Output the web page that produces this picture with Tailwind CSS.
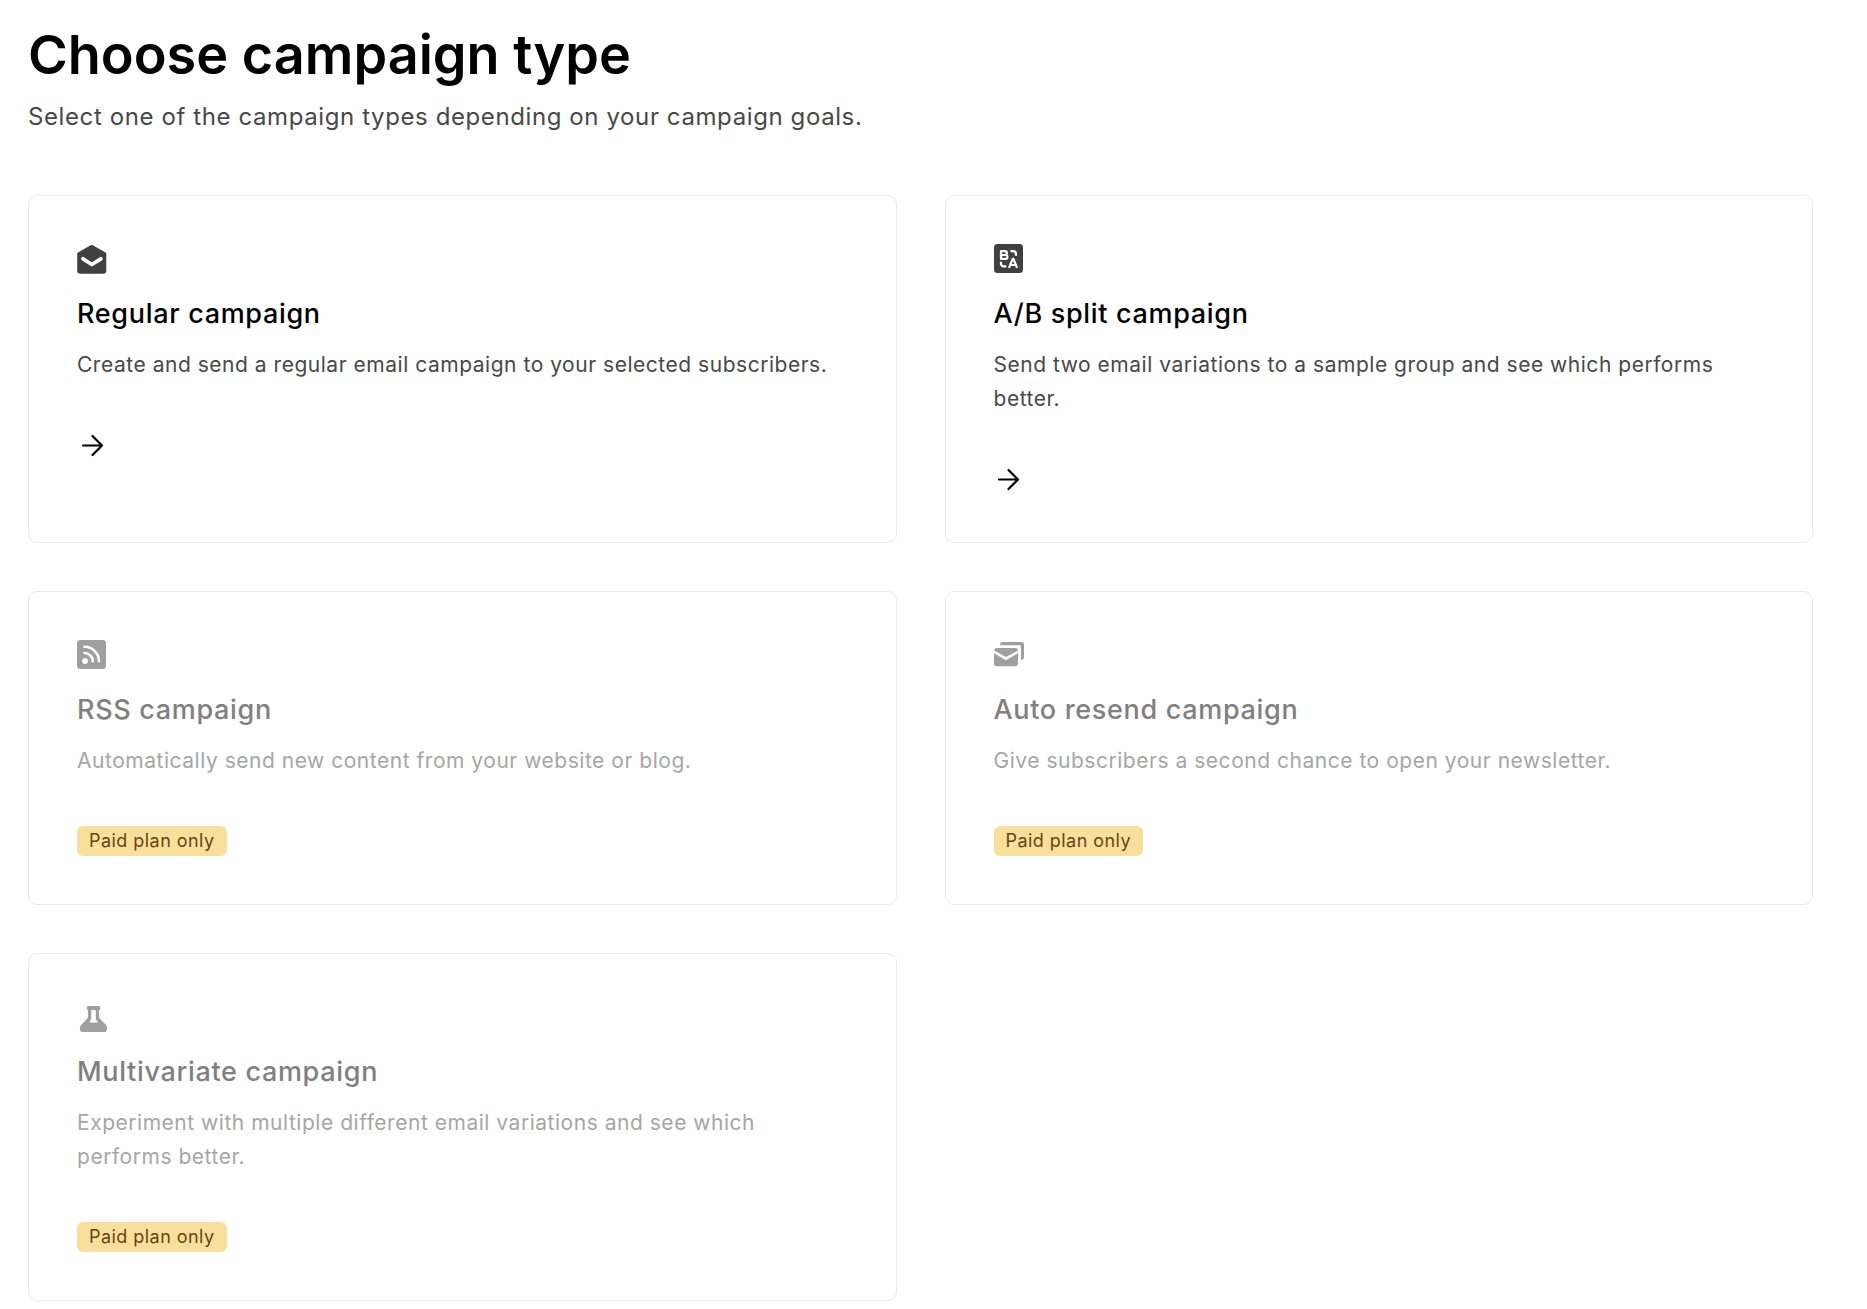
<!DOCTYPE html>
<html lang="en">
<head>
    <meta charset="UTF-8">
    <meta name="viewport" content="width=device-width, initial-scale=1.0">
    <title>Choose campaign type</title>
    <script src="https://cdn.jsdelivr.net/npm/@tailwindcss/browser@4"></script>
</head>
<body class="bg-white font-['Inter',sans-serif] text-black">

<main class="pt-[19px] pr-[54px] pb-2 pl-7">
    <header class="mb-[60px]">
        <h1 class="text-[54px] leading-[72px] font-semibold">Choose campaign type</h1>
        <p class="mt-2 text-2xl leading-9 tracking-wide text-[#484848]">Select one of the campaign types depending on your campaign goals.</p>
    </header>

    <div class="grid grid-cols-2 gap-12">
        <!-- Regular -->
        <a href="#regular" class="block rounded-[9px] border border-[#ebebed] p-12">
            <svg class="size-[30px] text-[#404040]" viewBox="0 0 30 30" fill="none">
                <path fill="currentColor" d="M13.2 1.5a3 3 0 0 1 3.1 0l11.8 6.8c.9.5 1.2 1.1 1.2 2V26.500a3.3 3.3 0 0 1-3.3 3.3H3.5A3.3 3.3 0 0 1 .2 26.500V10.300c0-.9.3-1.500 1.200-2z"/>
                <path stroke="#fff" stroke-width="3.800" stroke-linecap="round" stroke-linejoin="round" d="m6 14.800 8.800 5.700 9-5.700"/>
            </svg>
            <h2 class="mt-5 text-[27px] leading-10 font-medium tracking-wide">Regular campaign</h2>
            <p class="mt-3.5 text-[21px] leading-[34px] tracking-wide text-[#484848]">Create and send a regular email campaign to your selected subscribers.</p>
            <svg class="mt-12 size-[30px]" viewBox="0 0 30 30" fill="none" stroke="currentColor" stroke-width="2.200" stroke-linecap="round" stroke-linejoin="round"><path d="M6 15.500h19M15.500 6l9.500 9.500-9.500 9.500"/></svg>
        </a>

        <!-- A/B split -->
        <a href="#ab-split" class="block rounded-[9px] border border-[#ebebed] p-12">
            <svg class="size-[30px] text-[#404040]" viewBox="0 0 30 30" fill="none">
                <rect width="29" height="29" rx="3.500" fill="currentColor"/>
                <g stroke="#fff" stroke-width="2.200" stroke-linejoin="round">
                    <path d="M7 7.200h4a1.900 1.900 0 0 1 0 3.800H7zM7 11h4.500a1.900 1.900 0 0 1 0 3.900H7z"/>
                    <path d="m15 23.800 3.700-9h.7l3.700 9M16 21h6"/>
                    <path d="M16.500 7.200h2.500a3 3 0 0 1 3 3v1.500M7 17.700v1.700a3 3 0 0 0 3 3h2.300"/>
                </g>
            </svg>
            <h2 class="mt-5 text-[27px] leading-10 font-medium tracking-wide">A/B split campaign</h2>
            <p class="mt-3.5 text-[21px] leading-[34px] tracking-wide text-[#484848]">Send two email variations to a sample group and see which performs better.</p>
            <svg class="mt-12 size-[30px]" viewBox="0 0 30 30" fill="none" stroke="currentColor" stroke-width="2.200" stroke-linecap="round" stroke-linejoin="round"><path d="M5 15.500h19M14.500 6l9.500 9.500-9.500 9.500"/></svg>
        </a>

        <!-- RSS -->
        <section class="rounded-[9px] border border-[#ebebed] p-12">
            <svg class="size-[30px] text-[#9f9f9f]" viewBox="0 0 30 30" fill="none">
                <rect width="29" height="29" rx="3.500" fill="currentColor"/>
                <circle cx="8" cy="21" r="2.900" fill="#fff"/>
                <path stroke="#fff" stroke-width="2.600" stroke-linecap="round" d="M7.500 13a8.300 8.300 0 0 1 8.300 8.300M7.500 6.800a14.500 14.500 0 0 1 14.500 14.500"/>
            </svg>
            <h2 class="mt-5 text-[27px] leading-10 font-medium tracking-wide text-[#808080]">RSS campaign</h2>
            <p class="mt-3.5 text-[21px] leading-[34px] tracking-wide text-[#a6a6a6]">Automatically send new content from your website or blog.</p>
            <span class="mt-12 flex h-[30px] w-fit items-center rounded-md bg-[#f8e09c] px-3 text-lg tracking-wide text-[#6c4112]">Paid plan only</span>
        </section>

        <!-- Auto resend -->
        <section class="rounded-[9px] border border-[#ebebed] p-12">
            <svg class="size-[30px] text-[#9f9f9f]" viewBox="0 0 30 30" fill="none">
                <path fill="currentColor" d="M6 5.200A3 3 0 0 1 9 2h18.200A2.800 2.800 0 0 1 30 4.800V17a3 3 0 0 1-3 3V6.500A1.400 1.400 0 0 0 25.600 5.200z"/>
                <path fill="currentColor" d="M0 10.500A2.800 2.800 0 0 1 2.700 8h18.600a2.800 2.800 0 0 1 2.700 2.500l-12 6.500z"/>
                <path fill="currentColor" d="m0 13.300 11.200 6.400a1.600 1.600 0 0 0 1.600 0L24 13.300v10.200a2.800 2.800 0 0 1-2.800 2.800H2.800A2.800 2.800 0 0 1 0 23.500z"/>
            </svg>
            <h2 class="mt-5 text-[27px] leading-10 font-medium tracking-wide text-[#808080]">Auto resend campaign</h2>
            <p class="mt-3.5 text-[21px] leading-[34px] tracking-wide text-[#a6a6a6]">Give subscribers a second chance to open your newsletter.</p>
            <span class="mt-12 flex h-[30px] w-fit items-center rounded-md bg-[#f8e09c] px-3 text-lg tracking-wide text-[#6c4112]">Paid plan only</span>
        </section>

        <!-- Multivariate -->
        <section class="rounded-[9px] border border-[#ebebed] p-12">
            <svg class="size-[30px] text-[#9f9f9f]" viewBox="0 0 30 30">
                <path fill="currentColor" fill-rule="evenodd" d="M11.200 4h10.600a1.500 1.500 0 0 1 1.500 1.500v1.100a1.400 1.400 0 0 1-1.400 1.400v6.200c0 1 .3 1.700 1 2.500l6 6.300c2.500 2.800 1.400 8-3.600 8H7.700c-5 0-6.100-5.200-3.600-8l6-6.300c.700-.8 1-1.500 1-2.500V8a1.400 1.400 0 0 1-1.400-1.400V5.500A1.500 1.500 0 0 1 11.200 4zM14.200 8v7.500c0 1.500-.4 2.600-1.400 3.700l-.8 1c3 .6 6 .6 9 0l-.8-1c-1-1.100-1.400-2.200-1.400-3.700V8z"/>
            </svg>
            <h2 class="mt-5 text-[27px] leading-10 font-medium tracking-wide text-[#808080]">Multivariate campaign</h2>
            <p class="mt-3.5 text-[21px] leading-[34px] tracking-wide text-[#a6a6a6]">Experiment with multiple different email variations and see which performs better.</p>
            <span class="mt-12 flex h-[30px] w-fit items-center rounded-md bg-[#f8e09c] px-3 text-lg tracking-wide text-[#6c4112]">Paid plan only</span>
        </section>
    </div>
</main>

</body>
</html>
